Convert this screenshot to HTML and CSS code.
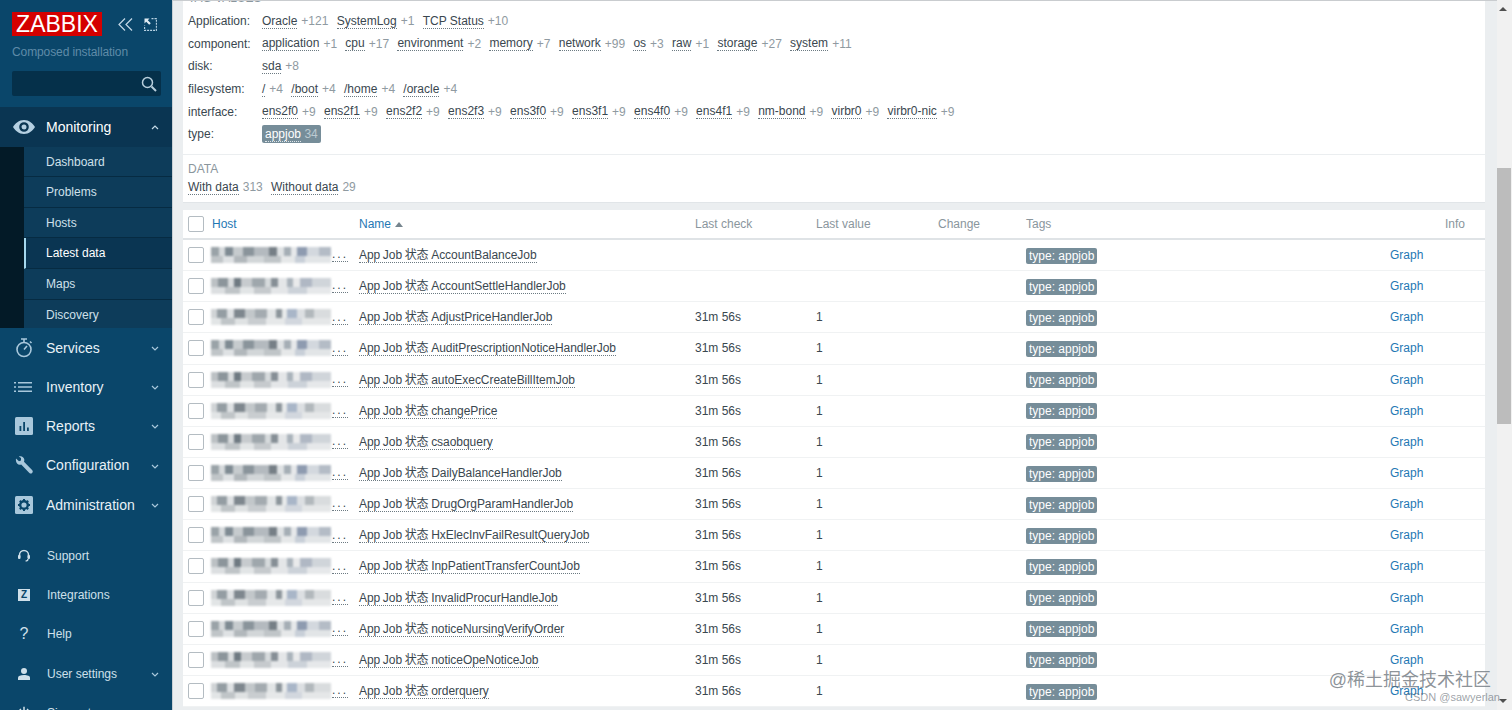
FILE: index.html
```html
<!DOCTYPE html>
<html>
<head>
  <meta charset="utf-8">
  <link rel="stylesheet" href="styles.css">
</head>
<body>
  <div class="sidebar">
    <div class="brand">
      <span class="logo">ZABBIX</span>
      <svg class="brand-icon" width="15" height="13" viewBox="0 0 15 13"><path d="M7 .5 1 6.500l6 6M14 .5l-6 6 6 6" fill="none" stroke="#c5d9e7" stroke-width="1.200"/></svg>
      <svg class="brand-icon" width="13" height="13" viewBox="0 0 13 13"><path d="M7.500 .6h4.900V12.400H.6V7.500" fill="none" stroke="#b9d3e4" stroke-width="1.100" stroke-dasharray="2 1"/><path d="M.5.500h5L3.800 2.200 6.800 5.200 5.200 6.800 2.200 3.800.5 5.500z" fill="#e1ecf3"/></svg>
    </div>
    <div class="server-name">Composed installation</div>
    <div class="search">
      <svg width="16" height="16" viewBox="0 0 16 16"><circle cx="6.500" cy="6.500" r="5" fill="none" stroke="#b9cfdd" stroke-width="1.500"/><path d="m10.500 10.500 4.500 4.500" stroke="#b9cfdd" stroke-width="2"/></svg>
    </div>

    <div class="nav-open">
      <div class="nav-item">
        <svg class="nav-icon" width="22" height="14" viewBox="0 0 22 14"><path fill-rule="evenodd" d="M11 0c5 0 9 3.500 11 7-2 3.500-6 7-11 7S2 10.500 0 7c2-3.500 6-7 11-7zm0 2.200a4.800 4.800 0 1 0 0 9.600 4.800 4.800 0 0 0 0-9.600zm0 2.300a2.500 2.500 0 1 1 0 5 2.500 2.500 0 0 1 0-5z" fill="#b5d0e2"/></svg>
        <span class="nav-label active">Monitoring</span>
        <svg class="chev" width="8" height="5" viewBox="0 0 8 5"><path d="M1 4 4 1l3 3" fill="none" stroke="#c6dbe8" stroke-width="1.200"/></svg>
      </div>
      <div class="sub-wrap">
        <div class="sub-item">Dashboard</div>
        <div class="sub-item">Problems</div>
        <div class="sub-item">Hosts</div>
        <div class="sub-item selected">Latest data</div>
        <div class="sub-item">Maps</div>
        <div class="sub-item">Discovery</div>
      </div>
    </div>

    <div class="nav-item">
      <svg class="nav-icon" width="22" height="20" viewBox="0 0 22 20"><circle cx="11" cy="11.500" r="7" fill="none" stroke="#a9c8dc" stroke-width="1.600"/><path d="M8 1h6M11 1v3M17 3.500l1.500 1.500M11 11.500l3-3.500" fill="none" stroke="#a9c8dc" stroke-width="1.600"/></svg>
      <span class="nav-label">Services</span>
      <svg class="chev" width="8" height="5" viewBox="0 0 8 5"><path d="M1 1l3 3 3-3" fill="none" stroke="#a9c8dc" stroke-width="1.200"/></svg>
    </div>
    <div class="nav-item">
      <svg class="nav-icon" width="20" height="12" viewBox="0 0 20 12"><path d="M0 1h2v1.500H0zM4 1h14v1.500H4zM0 5.200h2v1.500H0zM4 5.200h14v1.500H4zM0 9.500h2V11H0zM4 9.500h14V11H4z" fill="#a9c8dc"/></svg>
      <span class="nav-label">Inventory</span>
      <svg class="chev" width="8" height="5" viewBox="0 0 8 5"><path d="M1 1l3 3 3-3" fill="none" stroke="#a9c8dc" stroke-width="1.200"/></svg>
    </div>
    <div class="nav-item">
      <svg class="nav-icon" width="18" height="18" viewBox="0 0 18 18"><rect width="18" height="18" rx="1.500" fill="#a9c8dc"/><path d="M4.500 9h1.800v5H4.500zM8.200 5h1.800v9H8.200zM12 10.500h1.800V14H12z" fill="#0a466a"/></svg>
      <span class="nav-label">Reports</span>
      <svg class="chev" width="8" height="5" viewBox="0 0 8 5"><path d="M1 1l3 3 3-3" fill="none" stroke="#a9c8dc" stroke-width="1.200"/></svg>
    </div>
    <div class="nav-item">
      <svg class="nav-icon" width="18" height="18" viewBox="0 0 18 18"><path d="M1 2.500 4 5.200 6 4.500 6 2 3.800.6C6-.5 9 .8 9.300 3.500c.1.800 0 1.500-.3 2.200l8.300 8.500c.8 1 .5 2-.2 2.700-.8.700-1.800.8-2.700 0L6.200 8.600C3.400 9.600.2 7.400 1 2.500z" fill="#a9c8dc"/></svg>
      <span class="nav-label">Configuration</span>
      <svg class="chev" width="8" height="5" viewBox="0 0 8 5"><path d="M1 1l3 3 3-3" fill="none" stroke="#a9c8dc" stroke-width="1.200"/></svg>
    </div>
    <div class="nav-item">
      <svg class="nav-icon" width="18" height="18" viewBox="0 0 18 18"><rect width="18" height="18" rx="1.500" fill="#a9c8dc"/><circle cx="9" cy="9" r="3.800" fill="none" stroke="#0a466a" stroke-width="2.400"/><path d="M9 3v2.500M9 12.500V15M3 9h2.500M12.500 9H15M4.800 4.800l1.800 1.800M11.400 11.400l1.800 1.800M13.200 4.800l-1.800 1.800M6.600 11.400l-1.800 1.800" stroke="#0a466a" stroke-width="2"/></svg>
      <span class="nav-label">Administration</span>
      <svg class="chev" width="8" height="5" viewBox="0 0 8 5"><path d="M1 1l3 3 3-3" fill="none" stroke="#a9c8dc" stroke-width="1.200"/></svg>
    </div>

    <div class="nav-bottom">
      <div class="nav-item small">
        <svg class="nav-icon" width="12" height="13" viewBox="0 0 12 13"><path d="M1.500 8V5.500a4.500 4.500 0 0 1 9 0V8" fill="none" stroke="#cfe0ea" stroke-width="1.500"/><rect x="0" y="5.500" width="2.500" height="4" rx="1" fill="#cfe0ea"/><rect x="9.500" y="5.500" width="2.500" height="4" rx="1" fill="#cfe0ea"/><path d="M10 9.500c0 1.500-1 2-2.500 2" fill="none" stroke="#cfe0ea" stroke-width="1.200"/></svg>
        <span class="nav-label">Support</span>
      </div>
      <div class="nav-item small">
        <span class="nav-icon z-icon">Z</span>
        <span class="nav-label">Integrations</span>
      </div>
      <div class="nav-item small">
        <span class="nav-icon help-icon">?</span>
        <span class="nav-label">Help</span>
      </div>
      <div class="nav-item small">
        <svg class="nav-icon" width="12" height="12" viewBox="0 0 12 12"><circle cx="6" cy="3" r="3" fill="#cfe0ea"/><path d="M0 12V9.500C0 8 2.500 7 6 7s6 1 6 2.500V12z" fill="#cfe0ea"/></svg>
        <span class="nav-label">User settings</span>
        <svg class="chev" width="8" height="5" viewBox="0 0 8 5"><path d="M1 1l3 3 3-3" fill="none" stroke="#a9c8dc" stroke-width="1.200"/></svg>
      </div>
      <div class="nav-item small">
        <svg class="nav-icon" width="12" height="13" viewBox="0 0 12 13"><path d="M6 0v6" stroke="#cfe0ea" stroke-width="1.500"/><path d="M3 2.500a5 5 0 1 0 6 0" fill="none" stroke="#cfe0ea" stroke-width="1.500"/></svg>
        <span class="nav-label">Sign out</span>
      </div>
    </div>
  </div>

  <div class="main">
    <div class="filter-card">
      <div class="tag-section">
        <div class="section-title">TAG VALUES</div>
        <div class="tag-row"><span class="tag-name">Application:</span><a class="val">Oracle</a><span class="count">+121</span><a class="val">SystemLog</a><span class="count">+1</span><a class="val">TCP Status</a><span class="count">+10</span></div>
        <div class="tag-row"><span class="tag-name">component:</span><a class="val">application</a><span class="count">+1</span><a class="val">cpu</a><span class="count">+17</span><a class="val">environment</a><span class="count">+2</span><a class="val">memory</a><span class="count">+7</span><a class="val">network</a><span class="count">+99</span><a class="val">os</a><span class="count">+3</span><a class="val">raw</a><span class="count">+1</span><a class="val">storage</a><span class="count">+27</span><a class="val">system</a><span class="count">+11</span></div>
        <div class="tag-row"><span class="tag-name">disk:</span><a class="val">sda</a><span class="count">+8</span></div>
        <div class="tag-row"><span class="tag-name">filesystem:</span><a class="val">/</a><span class="count">+4</span><a class="val">/boot</a><span class="count">+4</span><a class="val">/home</a><span class="count">+4</span><a class="val">/oracle</a><span class="count">+4</span></div>
        <div class="tag-row"><span class="tag-name">interface:</span><a class="val">ens2f0</a><span class="count">+9</span><a class="val">ens2f1</a><span class="count">+9</span><a class="val">ens2f2</a><span class="count">+9</span><a class="val">ens2f3</a><span class="count">+9</span><a class="val">ens3f0</a><span class="count">+9</span><a class="val">ens3f1</a><span class="count">+9</span><a class="val">ens4f0</a><span class="count">+9</span><a class="val">ens4f1</a><span class="count">+9</span><a class="val">nm-bond</a><span class="count">+9</span><a class="val">virbr0</a><span class="count">+9</span><a class="val">virbr0-nic</a><span class="count">+9</span></div>
        <div class="tag-row"><span class="tag-name">type:</span><span class="picked"><a class="val">appjob</a> 34</span></div>
      </div>
      <div class="data-section">
        <div class="section-title">DATA</div>
        <div class="tag-row"><a class="val">With data</a><span class="count">313</span><a class="val">Without data</a><span class="count">29</span></div>
      </div>
    </div>

    <table class="data-table">
      <thead>
        <tr>
          <th class="c-check"><span class="checkbox"></span></th>
          <th class="c-host link">Host</th>
          <th class="c-name link">Name <span class="sort-up"></span></th>
          <th class="c-check-time">Last check</th>
          <th class="c-value">Last value</th>
          <th class="c-change">Change</th>
          <th class="c-tags">Tags</th>
          <th class="c-graph"></th>
          <th class="c-info">Info</th>
        </tr>
      </thead>
      <tbody>
        <tr><td><span class="checkbox"></span></td><td><span class="host-blur b1"></span><span class="dots">...</span></td><td><a class="val">App Job 状态 AccountBalanceJob</a></td><td></td><td></td><td></td><td><span class="tag">type: appjob</span></td><td class="link">Graph</td><td></td></tr>
        <tr><td><span class="checkbox"></span></td><td><span class="host-blur b2"></span><span class="dots">...</span></td><td><a class="val">App Job 状态 AccountSettleHandlerJob</a></td><td></td><td></td><td></td><td><span class="tag">type: appjob</span></td><td class="link">Graph</td><td></td></tr>
        <tr><td><span class="checkbox"></span></td><td><span class="host-blur b3"></span><span class="dots">...</span></td><td><a class="val">App Job 状态 AdjustPriceHandlerJob</a></td><td>31m 56s</td><td>1</td><td></td><td><span class="tag">type: appjob</span></td><td class="link">Graph</td><td></td></tr>
        <tr><td><span class="checkbox"></span></td><td><span class="host-blur b1"></span><span class="dots">...</span></td><td><a class="val">App Job 状态 AuditPrescriptionNoticeHandlerJob</a></td><td>31m 56s</td><td>1</td><td></td><td><span class="tag">type: appjob</span></td><td class="link">Graph</td><td></td></tr>
        <tr><td><span class="checkbox"></span></td><td><span class="host-blur b2"></span><span class="dots">...</span></td><td><a class="val">App Job 状态 autoExecCreateBillItemJob</a></td><td>31m 56s</td><td>1</td><td></td><td><span class="tag">type: appjob</span></td><td class="link">Graph</td><td></td></tr>
        <tr><td><span class="checkbox"></span></td><td><span class="host-blur b3"></span><span class="dots">...</span></td><td><a class="val">App Job 状态 changePrice</a></td><td>31m 56s</td><td>1</td><td></td><td><span class="tag">type: appjob</span></td><td class="link">Graph</td><td></td></tr>
        <tr><td><span class="checkbox"></span></td><td><span class="host-blur b2"></span><span class="dots">...</span></td><td><a class="val">App Job 状态 csaobquery</a></td><td>31m 56s</td><td>1</td><td></td><td><span class="tag">type: appjob</span></td><td class="link">Graph</td><td></td></tr>
        <tr><td><span class="checkbox"></span></td><td><span class="host-blur b1"></span><span class="dots">...</span></td><td><a class="val">App Job 状态 DailyBalanceHandlerJob</a></td><td>31m 56s</td><td>1</td><td></td><td><span class="tag">type: appjob</span></td><td class="link">Graph</td><td></td></tr>
        <tr><td><span class="checkbox"></span></td><td><span class="host-blur b3"></span><span class="dots">...</span></td><td><a class="val">App Job 状态 DrugOrgParamHandlerJob</a></td><td>31m 56s</td><td>1</td><td></td><td><span class="tag">type: appjob</span></td><td class="link">Graph</td><td></td></tr>
        <tr><td><span class="checkbox"></span></td><td><span class="host-blur b1"></span><span class="dots">...</span></td><td><a class="val">App Job 状态 HxElecInvFailResultQueryJob</a></td><td>31m 56s</td><td>1</td><td></td><td><span class="tag">type: appjob</span></td><td class="link">Graph</td><td></td></tr>
        <tr><td><span class="checkbox"></span></td><td><span class="host-blur b2"></span><span class="dots">...</span></td><td><a class="val">App Job 状态 InpPatientTransferCountJob</a></td><td>31m 56s</td><td>1</td><td></td><td><span class="tag">type: appjob</span></td><td class="link">Graph</td><td></td></tr>
        <tr><td><span class="checkbox"></span></td><td><span class="host-blur b3"></span><span class="dots">...</span></td><td><a class="val">App Job 状态 InvalidProcurHandleJob</a></td><td>31m 56s</td><td>1</td><td></td><td><span class="tag">type: appjob</span></td><td class="link">Graph</td><td></td></tr>
        <tr><td><span class="checkbox"></span></td><td><span class="host-blur b1"></span><span class="dots">...</span></td><td><a class="val">App Job 状态 noticeNursingVerifyOrder</a></td><td>31m 56s</td><td>1</td><td></td><td><span class="tag">type: appjob</span></td><td class="link">Graph</td><td></td></tr>
        <tr><td><span class="checkbox"></span></td><td><span class="host-blur b2"></span><span class="dots">...</span></td><td><a class="val">App Job 状态 noticeOpeNoticeJob</a></td><td>31m 56s</td><td>1</td><td></td><td><span class="tag">type: appjob</span></td><td class="link">Graph</td><td></td></tr>
        <tr><td><span class="checkbox"></span></td><td><span class="host-blur b3"></span><span class="dots">...</span></td><td><a class="val">App Job 状态 orderquery</a></td><td>31m 56s</td><td>1</td><td></td><td><span class="tag">type: appjob</span></td><td class="link">Graph</td><td></td></tr>
      </tbody>
    </table>
  </div>

  <div class="scrollbar">
    <span class="arrow-up"></span>
    <div class="thumb"></div>
    <span class="arrow-down"></span>
  </div>
  <div class="watermark">
    <div class="wm-big">@稀土掘金技术社区</div>
    <div class="wm-small">CSDN @sawyerlan</div>
  </div>
</body>
</html>
```

FILE: styles.css
```css
html, body {
  height: 100%;
}

body {
  margin: 0;
  display: flex;
  height: 710px;
  overflow: hidden;
  position: relative;
  font-family: "Liberation Sans", "Noto Sans CJK SC", sans-serif;
  font-size: 12px;
  color: #1f2c33;
  background: #ebeef0;
}

/* sidebar */
.sidebar {
  width: 173px;
  flex-shrink: 0;
  box-sizing: border-box;
  background: #0a466a;
  border-right: 1px solid #c9d0d5;
  color: #dce9f1;
  overflow: hidden;
}

.brand {
  display: flex;
  align-items: center;
  padding: 12px 0 0 12px;
}

.logo {
  background: #d40000;
  color: #fff;
  font-size: 23px;
  line-height: 24px;
  width: 90px;
  text-align: center;
}

.brand-icon {
  margin-left: 16px;
}

.brand-icon + .brand-icon {
  margin-left: 11px;
}

.server-name {
  color: #5f8ba8;
  font-size: 12px;
  letter-spacing: -0.1px;
  margin: 9px 0 0 12px;
  line-height: 14px;
}

.search {
  display: flex;
  justify-content: flex-end;
  align-items: center;
  box-sizing: border-box;
  width: 149px;
  height: 25px;
  margin: 12px 0 0 12px;
  padding-right: 4px;
  background: #05304a;
  border-radius: 2px;
}

.nav-open {
  margin-top: 11px;
  background: #0a3552;
}

.nav-item {
  position: relative;
  display: flex;
  align-items: center;
  height: 39.250px;
  padding-left: 46px;
}

.nav-open .nav-item {
  height: 40px;
}

.nav-label {
  font-size: 14px;
  color: #e8f1f7;
}

.nav-label.active {
  color: #fff;
}

.nav-icon {
  position: absolute;
  left: 24px;
  top: 50%;
  transform: translate(-50%, -50%);
}

.chev {
  position: absolute;
  left: 151px;
  top: 18px;
}

.sub-wrap {
  margin-left: 24px;
  box-shadow: -24px 0 0 #031a27;
}

.sub-item {
  display: flex;
  align-items: center;
  box-sizing: border-box;
  height: 30.600px;
  padding-left: 22px;
  color: #cfe0ea;
  background: #0d3c5a;
  border-bottom: 1px solid #062b42;
}

.sub-item:first-child {
  height: 30.200px;
}

.sub-item:last-child {
  height: 28.400px;
  padding-top: 2.200px;
  border-bottom: 0;
}

.sub-item.selected {
  color: #fff;
  background: #0a3552;
  border-left: 2px solid #a5d8ee;
  padding-left: 20px;
}

.nav-bottom {
  margin-top: 12px;
}

.nav-item.small {
  height: 39.300px;
  padding-left: 47px;
}

.small .nav-label {
  font-size: 12px;
  color: #cfe0ea;
}

.z-icon {
  width: 12px;
  height: 12px;
  background: #cfe0ea;
  color: #0a466a;
  font-size: 10px;
  font-weight: bold;
  line-height: 12px;
  text-align: center;
}

.help-icon {
  color: #cfe0ea;
  font-size: 16px;
}

/* main */
.main {
  flex: 1;
  min-width: 0;
  overflow: hidden;
  border-top: 1px solid #c9cccf;
  padding: 0 27px 0 10px;
}

.filter-card {
  margin-top: -10px;
  background: #fff;
  border-bottom: 1px solid #e1e5e8;
}

.tag-section {
  padding: 0 5px;
  height: 164px;
  border-bottom: 1px solid #ebeef0;
  box-sizing: border-box;
}

.section-title {
  color: #8a969d;
  font-size: 12px;
  line-height: 14px;
}

.tag-section .section-title {
  margin-bottom: 5px;
}

.tag-row {
  display: flex;
  align-items: center;
  height: 22.600px;
  color: #3a474f;
}

.tag-name {
  width: 74px;
}

.val {
  color: #3a474f;
  border-bottom: 1px dotted #6c7a82;
}

.count {
  color: #8f9aa1;
  margin: 0 8.300px 0 4px;
}

.picked {
  background: #768d99;
  color: #bccad1;
  border-radius: 2px;
  padding: 2px 3px;
}

.picked .val {
  color: #fff;
  border-bottom-color: #dfe6ea;
}

.data-section {
  padding: 7px 5px 6px;
}

.data-section .tag-row {
  height: 18px;
  margin-top: 2px;
}

/* table */
.data-table {
  width: 1302px;
  margin-top: 7px;
  table-layout: fixed;
  border-collapse: collapse;
  background: #fff;
}

.data-table th {
  height: 28px;
  padding: 0 5px;
  text-align: left;
  font-weight: normal;
  color: #8a969d;
  border-bottom: 2px solid #dfe3e6;
}

.data-table td {
  height: 30.150px;
  padding: 0 5px;
  line-height: 14px;
  color: #3a474f;
  border-bottom: 1px solid #f0f2f3;
}

.data-table td .val {
  letter-spacing: -0.04px;
  word-spacing: -0.7px;
}

.data-table th.link, .data-table td.link {
  color: #1f78b4;
}

.c-check { width: 14px; }
.c-host { width: 137px; }
.c-name { width: 326px; }
.c-check-time { width: 111px; }
.c-value { width: 112px; }
.c-change { width: 78px; }
.c-tags { width: 354px; }
.c-graph { width: 45px; }

.checkbox {
  display: block;
  box-sizing: border-box;
  width: 16px;
  height: 16px;
  background: #fff;
  border: 1px solid #b4bcc2;
  border-radius: 2px;
}

.sort-up {
  display: inline-block;
  margin-left: 1px;
  border: 4px solid transparent;
  border-top: 0;
  border-bottom: 5px solid #76858e;
  vertical-align: 1px;
}

/* hostnames are pixelated out in the source */
.host-blur {
  display: inline-block;
  width: 120px;
  height: 16px;
  margin-left: -1px;
  filter: blur(1.200px);
  vertical-align: middle;
  background-repeat: no-repeat;
  background-size: 100% 9px, 100% 7px;
  background-position: 0 0, 0 9px;
}

.b1 {
  background-image:
    linear-gradient(90deg, #9aa3a8 0 7%, #d6dadc 7% 12%, #7f8b93 12% 18%, #c6cbce 18% 27%, #8a949b 27% 36%, #b4babf 36% 48%, #767f86 48% 55%, #dfe2e4 55% 61%, #a5aeb5 61% 67%, #e6e8ea 67% 72%, #8e9bb0 72% 80%, #d3d8de 80% 90%, #b4bcc6 90%),
    linear-gradient(90deg, #c0c5c8 0 10%, #dfe2e4 10% 19%, #b2b8bc 19% 30%, #d2d6d8 30% 44%, #c0c5c8 44% 58%, #e6e8e9 58% 70%, #c8cfd8 70% 78%, #e2e5e7 78%);
}

.b2 {
  background-image:
    linear-gradient(90deg, #bcc1c4 0 6%, #8c959b 6% 14%, #d8dbdd 14% 19%, #6f7a82 19% 25%, #c7cbce 25% 34%, #9fa7ac 34% 45%, #d6dadc 45% 50%, #868f96 50% 56%, #e4e6e8 56% 63%, #aab3bb 63% 68%, #e9eaeb 68% 74%, #b0b8c4 74% 84%, #d0d5da 84%),
    linear-gradient(90deg, #dcdfe1 0 12%, #bfc4c7 12% 24%, #e2e5e6 24% 36%, #c6cacd 36% 50%, #e4e6e8 50% 64%, #ccd2d9 64% 80%, #e6e8ea 80%);
}

.b3 {
  background-image:
    linear-gradient(90deg, #d0d4d6 0 5%, #949da3 5% 13%, #dee1e3 13% 19%, #7e878e 19% 28%, #c2c7ca 28% 37%, #a4abb0 37% 47%, #e2e5e6 47% 54%, #8c959b 54% 59%, #e8eaeb 59% 63%, #a9b6c8 63% 72%, #dcdfe2 72% 78%, #b2b8bc 78% 86%, #d9dcde 86%),
    linear-gradient(90deg, #e2e5e6 0 8%, #c0c5c8 8% 20%, #dfe2e3 20% 31%, #c9cdd0 31% 46%, #e6e8e9 46% 62%, #d2d7de 62% 76%, #e5e7e8 76%);
}

.dots {
  border-bottom: 1px dotted #6c7a82;
  letter-spacing: 2px;
  margin-left: 1px;
}

.tag {
  display: inline-block;
  background: #768d99;
  color: #fff;
  line-height: 16px;
  padding: 0 3px;
  border-radius: 2px;
  vertical-align: -2px;
}

/* page scrollbar */
.scrollbar {
  position: absolute;
  top: 0;
  right: 0;
  bottom: 0;
  width: 15px;
  background: #f1f1f1;
}

.thumb {
  margin-top: 168px;
  width: 14px;
  height: 256px;
  background: #bcbcbc;
}

.arrow-up, .arrow-down {
  position: absolute;
  left: 2px;
  border: 4px solid transparent;
}

.arrow-up {
  top: 7px;
  border-top: 0;
  border-bottom: 4px solid #505050;
}

.arrow-down {
  bottom: 7px;
  border-bottom: 0;
  border-top: 4px solid #505050;
}

/* screenshot watermark */
.watermark {
  position: absolute;
  right: 21px;
  bottom: 6px;
  text-align: right;
  line-height: 14px;
}

.wm-big {
  font-size: 18px;
  line-height: 20px;
  color: rgba(90, 100, 108, 0.7);
}

.wm-small {
  font-size: 11px;
  color: rgba(90, 100, 108, 0.6);
  margin-right: -9px;
}
```
